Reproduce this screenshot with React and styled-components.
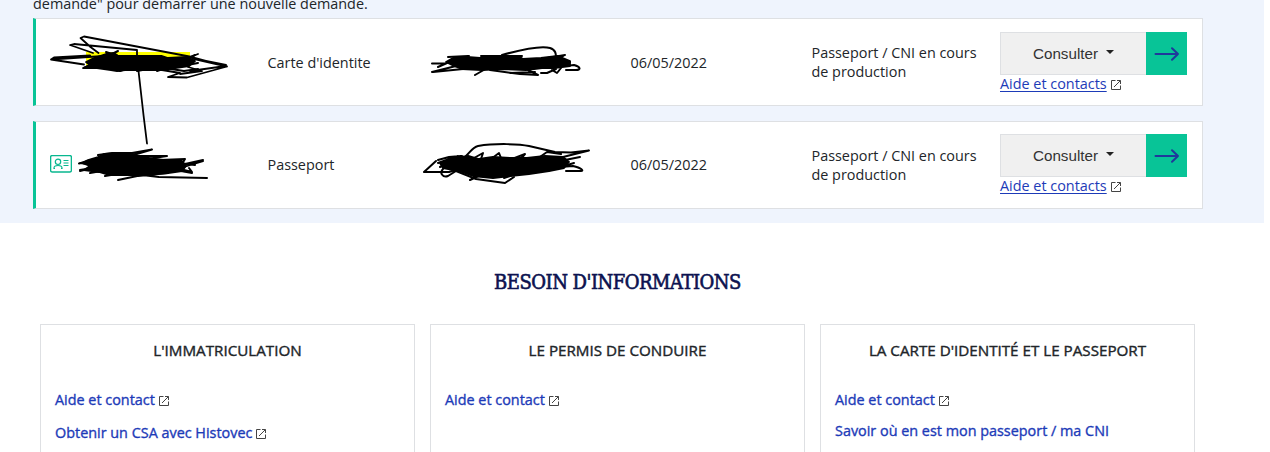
import React from "react";
import styled, { createGlobalStyle } from "styled-components";

const GlobalStyle = createGlobalStyle`
  * { box-sizing: border-box; }
  html, body { margin: 0; background: #fff; overflow: hidden; }
  body {
    font-family: "Open Sans", "Noto Sans", sans-serif;
    font-size: 14.4px;
    color: #212529;
  }
`;

const Page = styled.main`
  height: 452px;
  overflow: hidden;
`;

const Requests = styled.section`
  position: relative;
  width: 1264px;
  height: 223px;
  padding: 0 61px 0 33px;
  background: #eff4fd;
`;

const Intro = styled.p`
  margin: 0;
  height: 18px;
  line-height: 8px;
`;

const RequestList = styled.div`
  display: flex;
  flex-direction: column;
  gap: 15px;
`;

const RequestRow = styled.article`
  display: grid;
  grid-template-columns: 231.5px 363px 181px 188.5px 187px;
  height: 88px;
  border: 1px solid #dee0e3;
  border-left: 3px solid #08c497;
  background: #fff;
  line-height: 19px;
`;

const Cell = styled.div`
  display: flex;
  align-items: center;
  padding-bottom: ${(p) => p.$lift || 0}px;
`;

const IconCell = styled(Cell)`
  padding: 0 0 3px 14px;
`;

const Actions = styled.div`
  padding-top: ${(p) => p.$top}px;
`;

const ButtonGroup = styled.div`
  display: flex;
  width: 187px;
  height: 43px;
`;

const ConsultButton = styled.button`
  display: flex;
  align-items: center;
  justify-content: center;
  gap: 8px;
  width: 146px;
  padding: 0;
  border: 1px solid #dee0e3;
  border-right: 0;
  background: #f0f0f0;
  color: #333;
  font: 15.2px "Liberation Sans", sans-serif;
`;

const Caret = styled.span`
  border: 4.5px solid transparent;
  border-top-color: #222;
  border-bottom: 0;
  margin-bottom: 3px;
`;

const GoButton = styled.button`
  display: grid;
  place-items: center;
  width: 41px;
  padding: 0;
  border: 0;
  background: #08c497;
`;

const HelpLine = styled.div`
  display: flex;
  align-items: flex-end;
  gap: 4px;
  height: 18px;
  line-height: 18px;
  & > svg { margin-bottom: 3px; }
`;

const HelpLink = styled.a`
  color: #1d3bb8;
  text-decoration: underline;
  text-underline-offset: 2px;
`;

const Information = styled.section`
  padding: 46px 0 0 40px;
`;

const Heading = styled.h2`
  width: 1155px;
  height: 26px;
  margin: 0 0 29px;
  text-align: center;
  font: 400 20px/26px "DejaVu Serif Condensed", "DejaVu Serif", serif;
  font-stretch: condensed;
  letter-spacing: -0.5px;
  color: #0c1250;
  -webkit-text-stroke: 0.6px #0c1250;
`;

const Cards = styled.div`
  display: flex;
  gap: 15px;
`;

const Card = styled.article`
  width: 375px;
  height: 200px;
  padding: 0 14px;
  border: 1px solid #dee0e3;
  background: #fff;
`;

const CardTitle = styled.h3`
  height: 51px;
  margin: 0 0 14px;
  line-height: 51px;
  text-align: center;
  font-size: 15.2px;
  font-weight: 400;
  -webkit-text-stroke: 0.4px #212529;
`;

const CardLine = styled.div`
  display: flex;
  align-items: flex-end;
  gap: 4px;
  height: 20px;
  line-height: 20px;
  margin-bottom: ${(p) => p.$gap}px;
  & > svg { margin-bottom: 4px; }
`;

const CardLink = styled.a`
  color: #1d3bb8;
  -webkit-text-stroke: 0.35px #1d3bb8;
`;

const Annotations = styled.svg`
  position: absolute;
  left: 0;
  top: 0;
  pointer-events: none;
`;

const ExternalIcon = () => (
  <svg width="10" height="10" viewBox="0 0 10 10" fill="none" stroke="#444">
    <path d="M4.500 .5h-4v9h9V5.500M6 .5h3.500V4M9.300 .7 3 7" />
  </svg>
);

const ArrowIcon = () => (
  <svg width="26" height="16" viewBox="0 0 26 16" fill="none" stroke="#20389b" strokeWidth="2" strokeLinecap="round" strokeLinejoin="round">
    <path d="M1.500 8H24M18 2.200 24 8l-6 5.800" />
  </svg>
);

const IdentityIcon = () => (
  <svg width="22" height="18" viewBox="0 0 22 18" fill="none" stroke="#08b78f">
    <rect x=".6" y=".6" width="20.800" height="16.400" rx="1.500" strokeWidth="1.400" />
    <circle cx="8" cy="6.800" r="2.700" strokeWidth="1.200" />
    <path d="M4 14v-1c0-2 1.500-2.500 4-2.500s4 .5 4 2.500v1M3.500 13.500H5M11 13.500h1.500M13.500 5.500h5M13.500 8h5M13.500 10.500h5" strokeWidth="1.200" />
  </svg>
);

const Scribbles = () => (
  <Annotations width="1264" height="223" viewBox="0 0 1264 223" stroke="#000" strokeWidth="1.800" strokeLinecap="round" strokeLinejoin="round" fill="none">
    <path d="M86 52h104v15H86z" fill="#ff0" stroke="none" />
    <path d="M227 66.500 192 57 84 36.500 80.500 38l10 9 8 6M137 55v-5l-63-6-4 1 23 8M137.500 62l6 53 3.500 28.500M90 55.500l-36 2-3 2 33 5M51 59.500l60-4M227 66.500l-35-8M227 66.500l-40 11-19-.5 12-4-18-3M226 65l-30-6M190 71l36-5M198 54l-17 7M188 67l14 4-22 3" />
    <path d="M86 62l8-4 12-4 8-1 4 3 44 0 6 2 19-1 8 4-6 5-14 2-12 2-16 0-22 0-8 1-6-1-14-2-14 0 7-3z" fill="#000" />
    <path d="M84 68l34-17M106 52l12 4M178 63l17-8M104 65l16 6 14-5M137 71l22-4M157 71l20-7M158 67l26 4 14-2M166 69l32-6" strokeWidth="2" />
    <path d="M88 160l10-3 6-3 27-1 10 4 22 3 19 1 4 5-4 5-14 2-25 2-12 0-22 0-10-3-15-2 6-4-8-3z" fill="#000" />
    <path d="M98 155l14-2 20 0 20-3.500-17 5M105 154l34 2 28 0-20 3M79 163.500l25-7M80 170l25-4-25-3M80 171l24-6M90 173l29-5M105 176l30-5M118 180l24-5 17 2 48 1M138 176l30-3M160 160l25-1-6 10M203 160l-18 4M203 161l-20 6-14 4M192 173l-11-2M189 168l3 4-12-3M177 163l18 2" strokeWidth="2" />
    <path d="M446 62l7-4 14-1 13 1 22-1 18 0 3 2 18-1 17-2 12 5 0 5-16 2-12 0-16 2-25-1-19 1-20-1-8-3z" fill="#000" />
    <path d="M432 63.500h14M438 67l18-8 13-3M448 57l20-1M432 72l24-6M433 72l30-3M481 56h41M502 55c25-7 41-9 48-7 6 2 6 6 6 10M529 61l36-6-9 5 14 2-4 4 8-1c7 2 7 5 2 5h-10M475 75l14-8M490 70l30 4 18 1-10-5M510 73l25-1M541 73h6l9-4M552 70l5 3 4-5" strokeWidth="2" />
    <path d="M440 163l12-5 17-2 10 3 14-2 18 1 16 0 18-2 18 1 6 5-5 6-15 3-20 3-19 2-17 2-20-2-14-5-16-3z" fill="#000" />
    <path d="M466 156c4-4 7-9 12-10 18-3 42-2 51 0l26 6 16 .5 18-2-28 7M436 161l-12 11 25 0 12-4M438 160l11-3 12-1M438 163l20-7M443 169c-4 4 0 9 5 7l8-5 20 8 29 4 9-6M440 167l22-11M474 158l9-5-2 6M491 159l8-6 2 5M512 159l13-5-6 7M537 159l10-7 14 2M560 161l20-4M560 167l13-1c9 2 11 5 8 5h-15M547 171l27-8M470 180l15-7M492 177l12-5M504 178l20-7" strokeWidth="2" />
  </Annotations>
);

const requests = [
  { type: "Carte d'identite", date: "06/05/2022", identity: false, top: 13, lift: 0 },
  { type: "Passeport", date: "06/05/2022", identity: true, top: 12, lift: 2 },
];

const topics = [
  { title: "L'IMMATRICULATION", gap: 13, links: [["Aide et contact", true], ["Obtenir un CSA avec Histovec", true]] },
  { title: "LE PERMIS DE CONDUIRE", gap: 13, links: [["Aide et contact", true]] },
  { title: "LA CARTE D'IDENTITÉ ET LE PASSEPORT", gap: 11, links: [["Aide et contact", true], ["Savoir où en est mon passeport / ma CNI", false]] },
];

export default function App() {
  return (
    <Page>
      <GlobalStyle />
      <Requests>
        <Intro>demande" pour démarrer une nouvelle demande.</Intro>
        <RequestList>
          {requests.map((request) => (
            <RequestRow key={request.type}>
              <IconCell>{request.identity && <IdentityIcon />}</IconCell>
              <Cell $lift={request.lift}>{request.type}</Cell>
              <Cell $lift={request.lift}>{request.date}</Cell>
              <Cell>Passeport / CNI en cours<br />de production</Cell>
              <Actions $top={request.top}>
                <ButtonGroup>
                  <ConsultButton>Consulter<Caret /></ConsultButton>
                  <GoButton aria-label="Ouvrir"><ArrowIcon /></GoButton>
                </ButtonGroup>
                <HelpLine><HelpLink>Aide et contacts</HelpLink><ExternalIcon /></HelpLine>
              </Actions>
            </RequestRow>
          ))}
        </RequestList>
        <Scribbles />
      </Requests>
      <Information>
        <Heading>BESOIN D'INFORMATIONS</Heading>
        <Cards>
          {topics.map((topic) => (
            <Card key={topic.title}>
              <CardTitle>{topic.title}</CardTitle>
              {topic.links.map(([label, external]) => (
                <CardLine key={label} $gap={topic.gap}>
                  <CardLink>{label}</CardLink>
                  {external && <ExternalIcon />}
                </CardLine>
              ))}
            </Card>
          ))}
        </Cards>
      </Information>
    </Page>
  );
}
